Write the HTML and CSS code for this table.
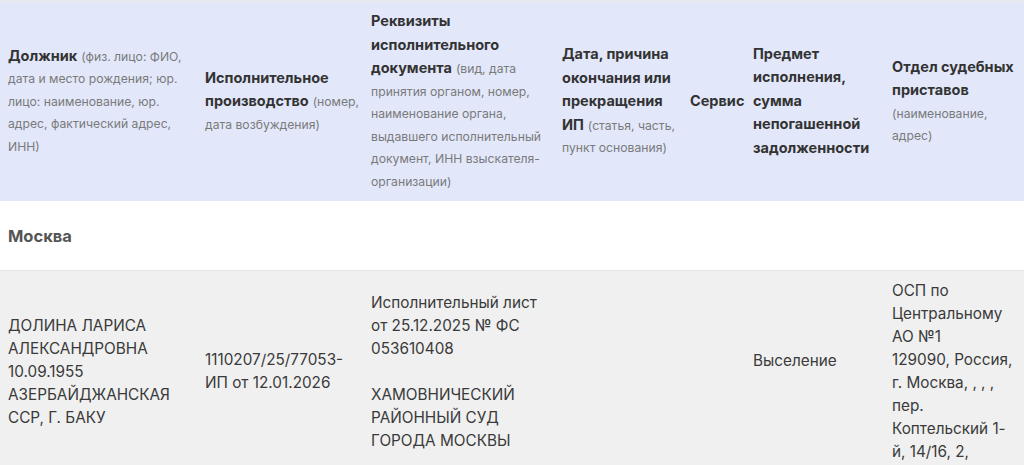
FILE: index.html
```html
<!DOCTYPE html>
<html lang="ru">
<head>
<meta charset="utf-8">
<link rel="stylesheet" href="styles.css">
</head>
<body>
<table class="grid">
  <colgroup>
    <col class="c1"><col class="c2"><col class="c3"><col class="c4"><col class="c5"><col class="c6"><col class="c7">
  </colgroup>
  <thead>
    <tr class="head">
      <th><b>Должник</b> <small>(физ. лицо: ФИО, дата и место рождения; юр. лицо: наименование, юр. адрес, фактический адрес, ИНН)</small></th>
      <th><b>Исполнительное производство</b> <small>(номер, дата возбуждения)</small></th>
      <th><b>Реквизиты исполнительного документа</b> <small>(вид, дата принятия органом, номер, наименование органа, выдавшего исполнительный документ, ИНН взыскателя-организации)</small></th>
      <th><b>Дата, причина окончания или прекращения ИП</b> <small>(статья, часть, пункт основания)</small></th>
      <th><b>Сервис</b></th>
      <th><b>Предмет исполнения, сумма непогашенной задолженности</b></th>
      <th><b>Отдел судебных приставов</b> <small>(наименование, адрес)</small></th>
    </tr>
  </thead>
  <tbody>
    <tr class="region">
      <td colspan="7">Москва</td>
    </tr>
    <tr class="data">
      <td>ДОЛИНА ЛАРИСА АЛЕКСАНДРОВНА 10.09.1955 АЗЕРБАЙДЖАНСКАЯ ССР, Г. БАКУ</td>
      <td>1110207/25/77053-ИП от 12.01.2026</td>
      <td>Исполнительный лист от 25.12.2025 № ФС 053610408<br><br>ХАМОВНИЧЕСКИЙ РАЙОННЫЙ СУД ГОРОДА МОСКВЫ</td>
      <td></td>
      <td></td>
      <td class="raised">Выселение</td>
      <td>ОСП по Центральному АО №1<br>129090, Россия, г. Москва, , , , пер. Коптельский 1-й, 14/16, 2,</td>
    </tr>
  </tbody>
</table>
</body>
</html>
```

FILE: styles.css
```css
html, body {
  margin: 0;
  padding: 0;
  background: #ffffff;
}

body {
  font-family: Inter, "Noto Sans", "Liberation Sans", sans-serif;
  color: #363636;
  overflow: hidden;
}

.grid {
  width: 1024px;
  border-collapse: collapse;
  table-layout: fixed;
  border-top: 3px solid #e6e9f0;
}

.c1 { width: 197px; }
.c2 { width: 166px; }
.c3 { width: 191px; }
.c4 { width: 128px; }
.c5 { width: 63px; }
.c6 { width: 139px; }
.c7 { width: 140px; }

.head th {
  background: #e2e8fa;
  text-align: left;
  vertical-align: middle;
  font-weight: normal;
  font-size: 14px;
  line-height: 22.5px;
  padding: 6px 2px 9px 8px;
  color: #333333;
}

.head b {
  font-size: 14.5px;
  line-height: 23.5px;
  font-weight: 700;
  color: #333333;
}

.head small {
  font-size: 12.2px;
  line-height: 1;
  color: #7a7a7a;
}

.region td {
  background: #ffffff;
  font-size: 16.5px;
  font-weight: 700;
  color: #555555;
  padding: 0 8px;
  height: 69px;
  border-bottom: 1px solid #e3e3e3;
}

.data td {
  background: #f0f0f0;
  font-size: 15.3px;
  line-height: 23px;
  padding: 8px 8px;
  vertical-align: middle;
  color: #3a3a3a;
}

.data td.raised {
  padding-bottom: 30px;
}
```
